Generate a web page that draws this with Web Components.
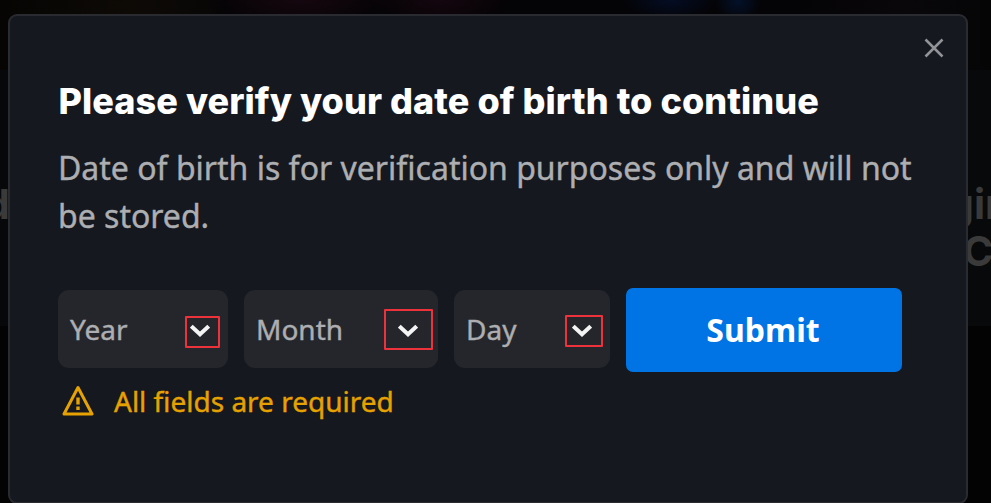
<!DOCTYPE html>
<html lang="en">
<head>
<meta charset="utf-8">
<title>Date of birth</title>
<style>
  html, body {
    margin: 0;
    height: 100%;
    overflow: hidden;
    background: #030304;
    font-family: "Noto Sans", sans-serif;
  }
</style>
</head>
<body>
<age-page>
  <page-backdrop slot="backdrop"></page-backdrop>
  <modal-dialog>
    <span slot="title">Please verify your date of birth to continue</span>
    <span slot="text">Date of birth is for verification purposes only and will not be stored.</span>
    <birth-select style="--w:170px; --end:18px; --mark:-7px -10px -10px -5px">Year</birth-select>
    <birth-select style="--w:194px; --end:20px; --mark:-14px -15px -12px -14px">Month</birth-select>
    <birth-select style="--w:156px; --end:18px; --mark:-8px -11px -9px -7px">Day</birth-select>
    <submit-button>Submit</submit-button>
    <form-warning slot="message">All fields are required</form-warning>
  </modal-dialog>
</age-page>

<script>
class AgePage extends HTMLElement {
  constructor() {
    super();
    this.attachShadow({ mode: "open" });
  }

  connectedCallback() {
    this.shadowRoot.innerHTML = `
    <style>
      :host {
        display: grid;
        grid-template: 503px / 991px;
        overflow: hidden;
      }
      ::slotted(*) {
        grid-area: 1 / 1;
      }
    </style>
    <slot name="backdrop"></slot>
    <slot></slot>
    `;
  }
}

class PageBackdrop extends HTMLElement {
  constructor() {
    super();
    this.attachShadow({ mode: "open" });
  }

  connectedCallback() {
    this.shadowRoot.innerHTML = `
    <style>
      :host {
        display: grid;
        grid-template-rows: 70px 256px 177px;
        color: #3a3a3a;
        font: 700 41px/47px Inter, sans-serif;
      }
      .hero {
        background:
          radial-gradient(50px 22px at 670px 0, #040d24, transparent),
          radial-gradient(24px 20px at 738px 2px, #04112a, transparent),
          radial-gradient(70px 26px at 440px 0, #15060f, transparent),
          radial-gradient(90px 26px at 300px 0, #16070f, transparent),
          linear-gradient(90deg, #060503 0, #0d0a06 130px, #090706 205px, #040305 225px, #040305 800px, #09070a 900px, #050506);
      }
      .tiles {
        display: flex;
        justify-content: space-between;
        align-items: flex-start;
        box-sizing: border-box;
        padding-top: 111px;
        background: linear-gradient(90deg, #070809, #08090a);
      }
      .left {
        margin-left: -16px;
      }
      .right {
        width: 43px;
        margin-right: -15px;
        white-space: nowrap;
      }
      .right div:first-child {
        margin-left: -15px;
      }
      .foot {
        background: #030304;
      }
    </style>
    <div class="hero"></div>
    <div class="tiles">
      <div class="left">d</div>
      <div class="right"><div>gin</div><div>C</div></div>
    </div>
    <div class="foot"></div>
    `;
  }
}

class ModalDialog extends HTMLElement {
  constructor() {
    super();
    this.attachShadow({ mode: "open" });
  }

  connectedCallback() {
    this.shadowRoot.innerHTML = `
    <style>
      :host {
        display: block;
        position: relative;
        box-sizing: border-box;
        width: 960px;
        height: 490px;
        margin: 14px 0 0 8px;
        padding: 63px 48px 0;
        border: 2px solid #2a2b30;
        border-radius: 9px;
        background: #15181f;
      }
      .close {
        position: absolute;
        top: 22px;
        right: 22px;
        width: 20px;
        height: 20px;
        padding: 0;
        border: 0;
        background: none;
      }
      .close svg {
        display: block;
      }
      h2 {
        margin: 0 0 0 0.5px;
        color: #fff;
        font: 800 36px/44px Inter, sans-serif;
        letter-spacing: 0.07px;
        white-space: nowrap;
      }
      p {
        margin: 21px -10px 0 0;
        color: #adaeb1;
        font-size: 32px;
        line-height: 48px;
        -webkit-text-stroke: 0.4px;
      }
      form {
        display: flex;
        align-items: center;
        gap: 16px;
        margin-top: 48px;
      }
    </style>
    <button class="close" aria-label="Close">
      <svg width="20" height="20" viewBox="0 0 20 20" fill="none" stroke="#929397" stroke-width="2.5">
        <path d="M1.500 1.500l17 17M18.500 1.500l-17 17"/>
      </svg>
    </button>
    <h2><slot name="title"></slot></h2>
    <p><slot name="text"></slot></p>
    <form><slot></slot></form>
    <slot name="message"></slot>
    `;
  }
}

class BirthSelect extends HTMLElement {
  constructor() {
    super();
    this.attachShadow({ mode: "open" });
  }

  connectedCallback() {
    this.shadowRoot.innerHTML = `
    <style>
      :host {
        display: flex;
        align-items: center;
        justify-content: space-between;
        box-sizing: border-box;
        width: var(--w);
        height: 78px;
        margin-bottom: 2px;
        padding: 0 var(--end) 0 12px;
        border-radius: 11px;
        background: #25262b;
        color: #adaeb1;
        font-size: 28px;
        line-height: 40px;
        -webkit-text-stroke: 0.4px;
      }
      .arrow {
        position: relative;
        width: 20px;
        height: 15px;
        margin-top: 3px;
      }
      .arrow svg {
        display: block;
      }
      .mark {
        position: absolute;
        inset: var(--mark);
        border: 2px solid #ee323c;
        border-radius: 1px;
      }
    </style>
    <slot></slot>
    <div class="arrow">
      <svg width="20" height="15" viewBox="0 0 20 15" fill="none" stroke="#f4f4f5" stroke-width="4">
        <path d="M1.300 3.200L10 11.200l8.700-8"/>
      </svg>
      <div class="mark"></div>
    </div>
    `;
  }
}

class SubmitButton extends HTMLElement {
  constructor() {
    super();
    this.attachShadow({ mode: "open" });
  }

  connectedCallback() {
    this.shadowRoot.innerHTML = `
    <style>
      :host {
        display: block;
      }
      button {
        display: block;
        width: 276px;
        height: 84px;
        padding: 0 2px 0 0;
        border: 0;
        border-radius: 7px;
        background: #0074e4;
        color: #fff;
        font: 700 32px/48px "Noto Sans", sans-serif;
      }
    </style>
    <button type="button"><slot></slot></button>
    `;
  }
}

class FormWarning extends HTMLElement {
  constructor() {
    super();
    this.attachShadow({ mode: "open" });
  }

  connectedCallback() {
    this.shadowRoot.innerHTML = `
    <style>
      :host {
        display: flex;
        align-items: center;
        gap: 20px;
        margin: 9px 0 0 4px;
        color: #e6a200;
        font-size: 28px;
        line-height: 40px;
        -webkit-text-stroke: 0.4px;
      }
      svg {
        display: block;
      }
    </style>
    <svg width="32" height="32" viewBox="0 0 32 32" fill="none" stroke="currentColor" stroke-width="3" stroke-linejoin="round">
      <path d="M16 2.500L30 29H2z"/>
      <path d="M16 12.500v7M16 21.500v3.500" stroke-width="3.400"/>
    </svg>
    <slot></slot>
    `;
  }
}

customElements.define("age-page", AgePage);
customElements.define("page-backdrop", PageBackdrop);
customElements.define("modal-dialog", ModalDialog);
customElements.define("birth-select", BirthSelect);
customElements.define("submit-button", SubmitButton);
customElements.define("form-warning", FormWarning);
</script>
</body>
</html>
